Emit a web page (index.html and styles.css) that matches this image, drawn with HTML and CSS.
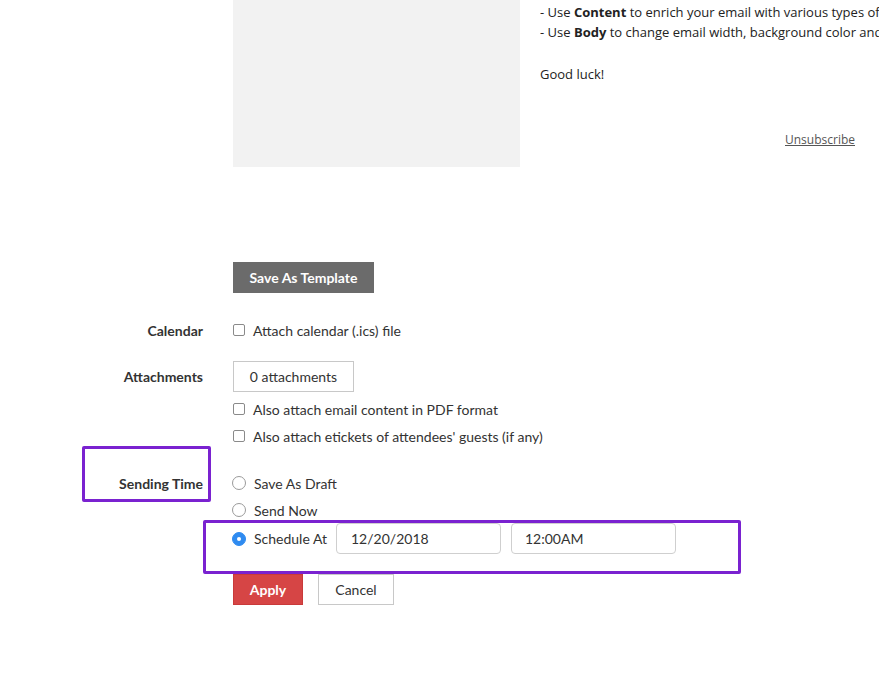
FILE: index.html
```html
<!DOCTYPE html>
<html>
<head>
<meta charset="utf-8">
<link rel="stylesheet" href="styles.css">
</head>
<body>
<div class="page">
  <section class="preview">
    <div class="thumb"></div>
    <div class="mail">
      <p class="line">- Use <b>Content</b> to enrich your email with various types of content</p>
      <p class="line">- Use <b>Body</b> to change email width, background color and more</p>
      <p class="line luck">Good luck!</p>
      <p class="unsub"><a>Unsubscribe</a></p>
    </div>
  </section>

  <section class="form">
    <div class="row r-save"><span></span><div><button class="btn btn-dark">Save As Template</button></div></div>
    <div class="row r-cal txt"><span class="label">Calendar</span><label class="opt"><i class="cb"></i>Attach calendar (.ics) file</label></div>
    <div class="row r-att"><span class="label">Attachments</span><div><button class="btn btn-light">0 attachments</button></div></div>
    <div class="row r-pdf txt"><span></span><label class="opt"><i class="cb"></i>Also attach email content in PDF format</label></div>
    <div class="row r-etk txt"><span></span><label class="opt"><i class="cb"></i>Also attach etickets of attendees' guests (if any)</label></div>
    <div class="row r-draft txt"><span class="label">Sending Time</span><label class="opt"><i class="rd"></i>Save As Draft</label></div>
    <div class="row r-now txt"><span></span><label class="opt"><i class="rd"></i>Send Now</label></div>
    <div class="row r-sched"><span></span>
      <div class="sched">
        <label class="opt"><i class="rd on"></i>Schedule At</label>
        <div class="input">12/20/2018</div>
        <div class="input">12:00AM</div>
      </div>
    </div>
    <div class="row r-apply"><span></span><div class="actions"><button class="btn btn-red">Apply</button><button class="btn btn-light btn-cancel">Cancel</button></div></div>

    <div class="mark mark-label"></div>
    <div class="mark mark-sched"></div>
  </section>
</div>
</body>
</html>
```

FILE: styles.css
```css
html, body { margin: 0; padding: 0; background: #fff; }
body { font-family: Lato, "Open Sans", sans-serif; color: #333; font-size: 14px; }
.page { width: 879px; height: 675px; overflow: hidden; position: relative; }

.preview { display: flex; height: 167px; }
.thumb { margin-left: 233px; width: 287px; height: 167px; background: #f2f2f2; }
.mail { margin-left: 20px; font-family: "Open Sans", sans-serif; font-size: 13px; color: #222; white-space: nowrap; width: 339px; overflow: hidden; padding-top: 2px; }
.mail p { margin: 0; line-height: 20px; }
.mail b { font-weight: 700; }
.mail .luck { margin-top: 22px; }
.mail .unsub { margin-top: 46px; padding-left: 245px; font-size: 12px; }
.mail .unsub a { color: #555; text-decoration: underline; }

.form { position: relative; display: flex; flex-direction: column; padding-top: 95px; }
.row { display: grid; grid-template-columns: 203px 1fr; column-gap: 30px; align-items: center; box-sizing: border-box; }
.row.txt { padding-bottom: 2px; }
.label { text-align: right; font-weight: 700; color: #333; font-size: 14px; }
.r-save { height: 31px; }
.r-cal { height: 20px; margin-top: 28px; }
.r-att { height: 31px; margin-top: 20px; }
.r-pdf { height: 20px; margin-top: 8px; }
.r-etk { height: 20px; margin-top: 7px; }
.r-draft { height: 20px; margin-top: 27px; }
.r-now { height: 20px; margin-top: 7px; }
.r-sched { height: 30px; margin-top: 2px; }
.r-apply { height: 31px; margin-top: 21px; }

.opt { display: flex; align-items: center; gap: 8px; font-size: 14px; color: #333; white-space: nowrap; }
.cb { width: 10px; height: 10px; border: 1px solid #8a8a8a; border-radius: 2px; background: #fff; display: inline-block; }
.rd { width: 12px; height: 12px; border: 1px solid #9a9a9a; border-radius: 50%; background: #fff; display: inline-block; box-sizing: content-box; margin-left: -1px; }
.rd.on { background: #2f8bf0; border-color: #2f8bf0; position: relative; }
.rd.on::after { content: ""; position: absolute; left: 4px; top: 4px; width: 4px; height: 4px; border-radius: 50%; background: #fff; }

.btn { font-family: Lato, sans-serif; font-size: 14px; height: 31px; padding: 0; border-radius: 0; cursor: pointer; display: block; }
.btn-dark { background: #6b6b6b; color: #fff; border: 0; font-weight: 700; width: 141px; }
.btn-light { background: #fff; color: #333; border: 1px solid #c8c8c8; width: 121px; }
.btn-red { background: #d64545; color: #fff; border: 1px solid #c93a3a; font-weight: 700; width: 70px; }
.btn-cancel { width: 76px; }
.actions { display: flex; gap: 15px; }

.sched { display: flex; align-items: center; }
.sched .opt { width: 103px; }
.input { box-sizing: border-box; width: 165px; height: 31px; border: 1px solid #cfcfcf; border-radius: 4px; padding-left: 14px; line-height: 29px; font-size: 14px; color: #333; margin-right: 10px; }
.input + .input { padding-left: 13px; }

.mark { position: absolute; border: 3px solid #7a22d0; border-radius: 2px; box-sizing: border-box; }
.mark-label { left: 82px; top: 279px; width: 129px; height: 56px; }
.mark-sched { left: 203px; top: 353px; width: 538px; height: 54px; }
```
